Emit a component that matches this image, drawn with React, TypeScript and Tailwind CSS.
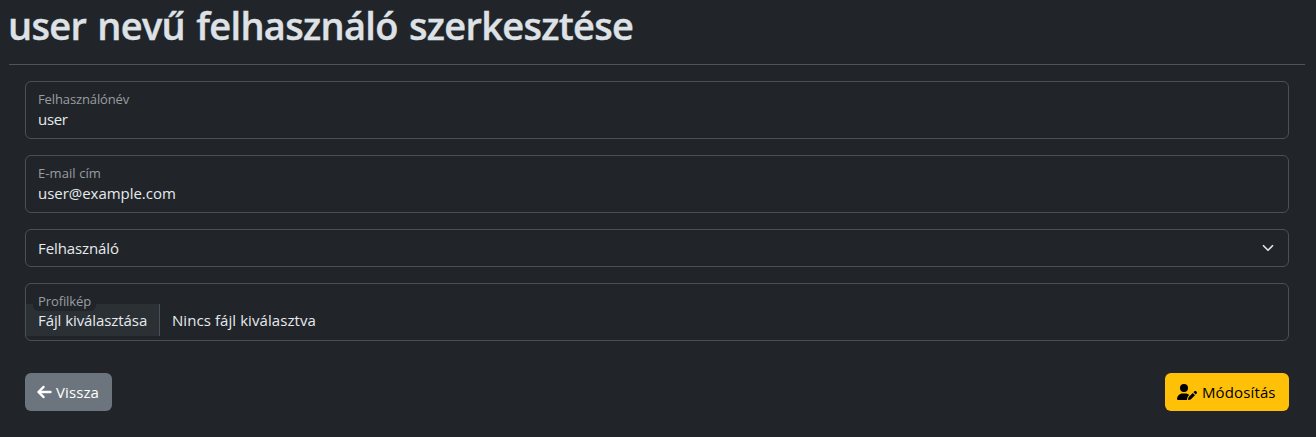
import type { ReactNode } from "react";
import { FaArrowLeft, FaUserPen } from "react-icons/fa6";

function Field({ label, value, labelTracking, tracking }: { label: string; value: string; labelTracking: string; tracking: string }) {
  return (
    <div className="h-[58px] rounded-md border border-[#495057] pl-3 pt-[7px]">
      <div className={`h-5 text-[13px] leading-5 text-[#999da1] ${labelTracking}`}>{label}</div>
      <div className={`h-5 text-[15px] leading-5 text-[#e6eaed] ${tracking}`}>{value}</div>
    </div>
  );
}

function Button({ className, children }: { className: string; children: ReactNode }) {
  return (
    <button type="button" className={`flex h-[38px] items-center rounded-md pl-3 text-[15px] leading-6 ${className}`}>
      {children}
    </button>
  );
}

export default function App() {
  return (
    <main className="h-[437px] bg-[#212529] pl-[9px] pr-[11px] font-['Open_Sans',sans-serif]">
      <h1 className="h-16 whitespace-nowrap pt-px text-[38px] font-semibold leading-[48px] tracking-[-0.69px] [word-spacing:2px] [-webkit-text-stroke:0.4px_#dee2e6] text-[#dee2e6]">
        <span className="-ml-px">user nevű felhasználó szerkesztése</span>
      </h1>
      <hr className="border-t border-[#4f5357]" />
      <form className="flex flex-col gap-4 px-4 pt-4">
        <Field label="Felhasználónév" value="user" labelTracking="tracking-[-0.12px]" tracking="tracking-[-0.3px]" />
        <Field label="E-mail cím" value="user@example.com" labelTracking="tracking-[0.08px]" tracking="tracking-[-0.03px]" />
        <div className="flex h-[38px] items-center justify-between rounded-md border border-[#495057] pl-3 pr-3 text-[15px] text-[#e6eaed]">
          <span className="tracking-[-0.1px]">Felhasználó</span>
          <svg viewBox="0 0 16 16" className="h-3 w-4" fill="none" stroke="#dee2e6" strokeWidth="2.3" strokeLinecap="round" strokeLinejoin="round">
            <path d="m2 5 6 6 6-6" />
          </svg>
        </div>
        <div className="relative h-[58px] rounded-md border border-[#495057] pt-5">
          <div className="flex h-8 text-[15px] leading-8 text-[#e6eaed]">
            <span className="w-[134px] whitespace-nowrap border-r border-[#495057] bg-[#2b3035] pl-3 tracking-[-0.08px]">Fájl kiválasztása</span>
            <span className="pl-3 tracking-[0.07px]">Nincs fájl kiválasztva</span>
          </div>
          <div className="absolute left-[7px] top-2 h-[19px] w-[63px] rounded-md bg-[#212529] pl-[5px] text-[13px] leading-[18px] tracking-[-0.1px] text-[#999da1]">
            Profilkép
          </div>
        </div>
        <div className="flex justify-between pt-4">
          <Button className="w-[87px] bg-[#6c757d] text-white">
            <FaArrowLeft className="mr-1 h-4 w-[15px]" stroke="currentColor" strokeWidth={16} />
            <span className="tracking-[0.1px]">Vissza</span>
          </Button>
          <Button className="w-[124px] bg-[#ffc107] text-black">
            <FaUserPen className="mr-[5px] h-4 w-5" />
            <span className="tracking-[0.13px]">Módosítás</span>
          </Button>
        </div>
      </form>
    </main>
  );
}
